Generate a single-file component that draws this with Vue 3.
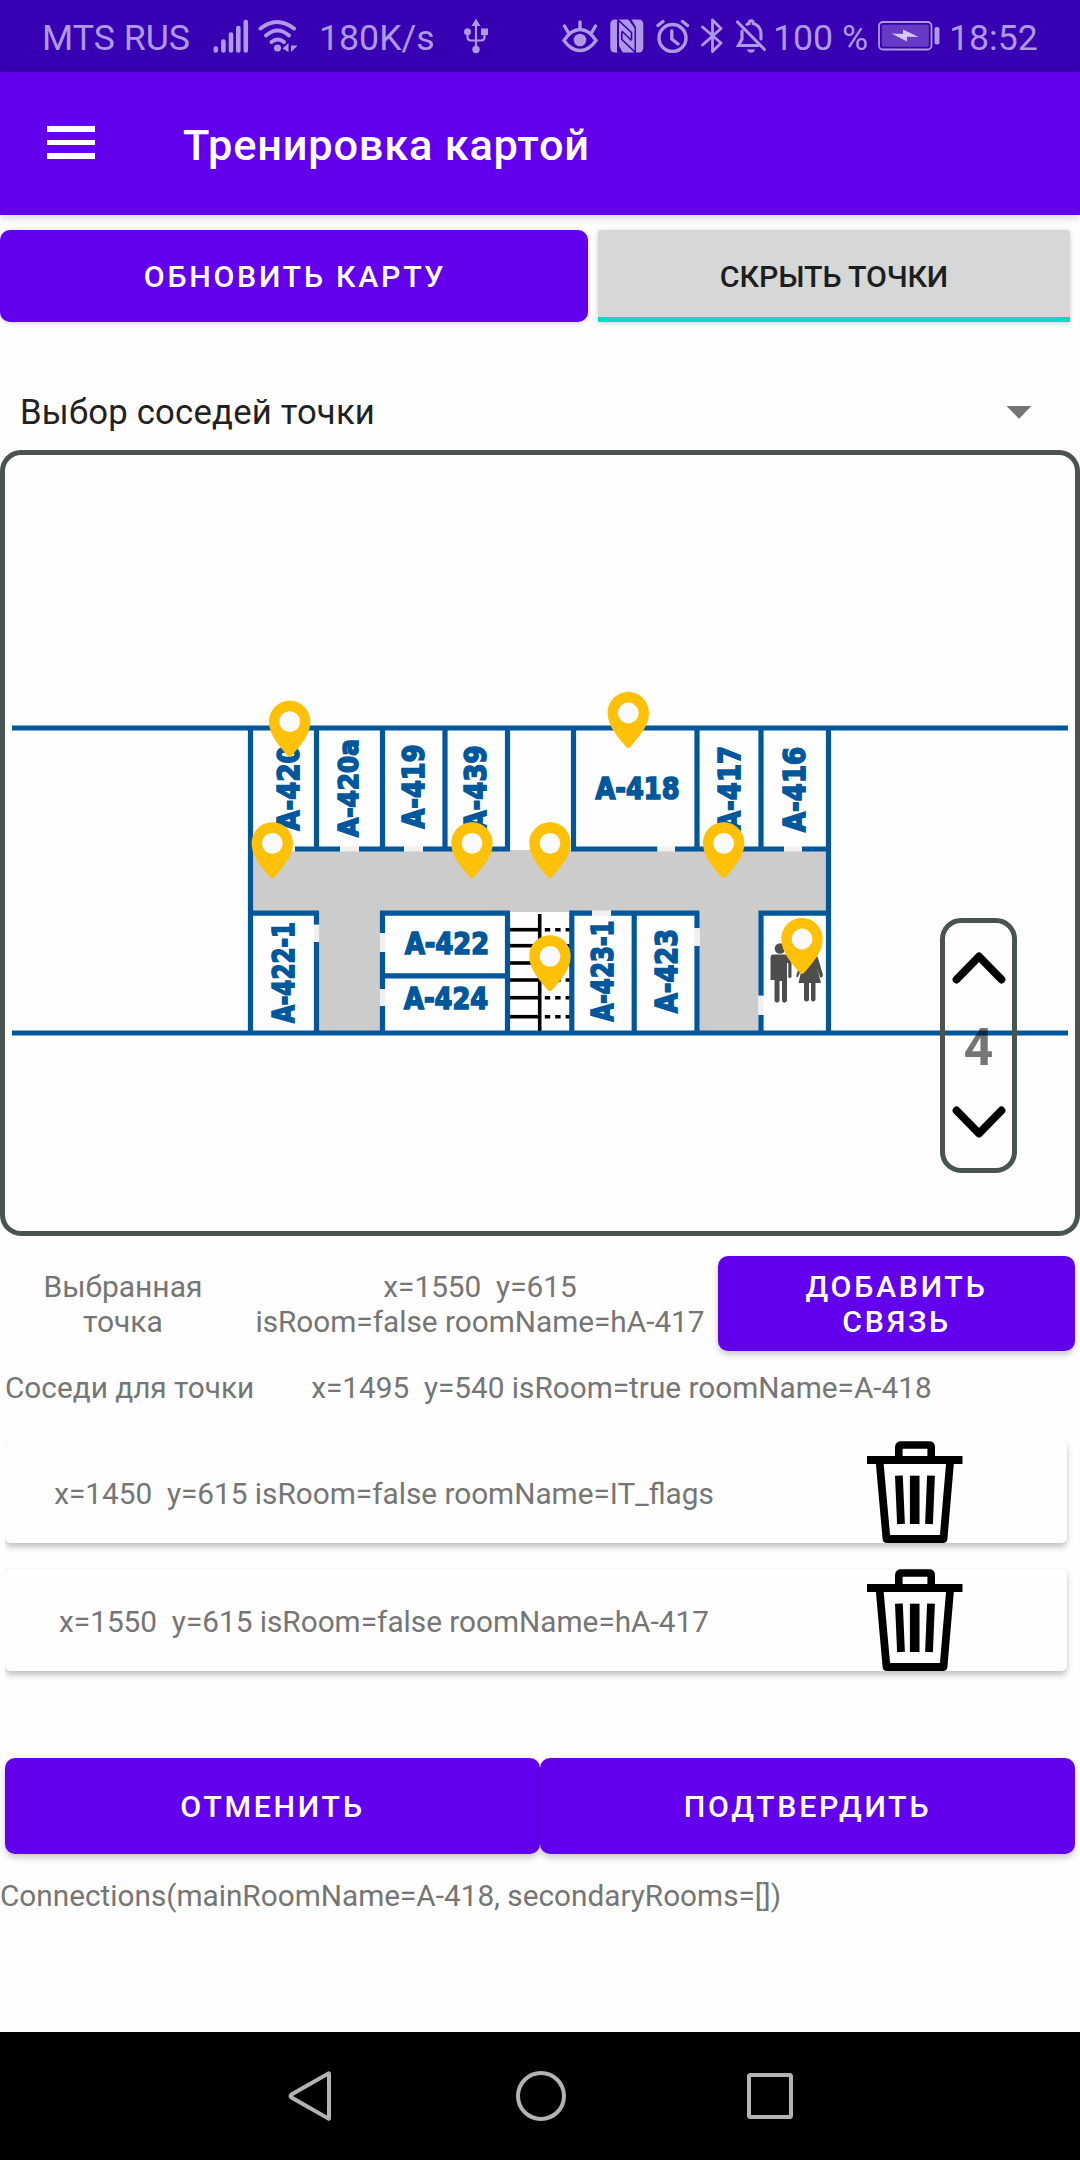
<script setup>
const pins = [
  { x: 289.7, y: 700.7 },
  { x: 272.3, y: 822.3 },
  { x: 472, y: 822.3 },
  { x: 628.3, y: 692 },
  { x: 550, y: 822.3 },
  { x: 723.7, y: 822.3 },
  { x: 550, y: 935.3 },
  { x: 802, y: 918 }
]

const flatLabels = [
  { text: 'A-418', x: 595.5, y: 799.3, len: 84 },
  { text: 'A-422', x: 405, y: 953.8, len: 84 },
  { text: 'A-424', x: 404.1, y: 1009.3, len: 84 }
]

const uprightLabels = [
  { text: 'A-420', x: 298.5, y: 830.5, len: 85 },
  { text: 'A-420a', x: 357.8, y: 837, len: 98, small: true },
  { text: 'A-419', x: 423.5, y: 828.5, len: 84 },
  { text: 'A-439', x: 485.5, y: 830.5, len: 85 },
  { text: 'A-417', x: 740.2, y: 831, len: 85 },
  { text: 'A-416', x: 804.5, y: 832, len: 85 },
  { text: 'A-422-1', x: 294, y: 1023, len: 101 },
  { text: 'A-423-1', x: 612.7, y: 1021.5, len: 101 },
  { text: 'A-423', x: 676.8, y: 1013, len: 84 }
]

const walls = [
  'M12 728H1068M12 1033H1068',
  'M250.5 728V1033M828.5 728V1033',
  'M316.5 728V849M382.5 728V849M445 728V849M507.5 728V851.5M573.5 728V851.5M697 728V849M761 728V849',
  'M253 849H275M295 849H340M359 849H404M423 849H510M571 849H657.5M675 849H784M802 849H829',
  'M250 913.2H319M380 913.2H510M569.3 913.2H592M611 913.2H699.4M758.4 913.2H829M382 975.8H508',
  'M316.5 913V924.7M316.5 942V1033M382.5 913V933M382.5 952V989M382.5 1006V1033M507.5 913V1033',
  'M571.8 913V1033M634.2 913V1033M697 913V928.3M697 945.7V1033M761 913V995.7M761 1015V1033'
].join('')

const doors =
  'M275 849H295M340 849H359M404 849H423M657.5 849H675M784 849H802M592 913.2H611' +
  'M316.5 924.7V942M382.5 933V952M382.5 989V1006M697 928.3V945.7M761 995.7V1015'

const steps = [929.7, 945.7, 963, 980, 997.7, 1016.7]

const neighbours = [
  'x=1450  y=615 isRoom=false roomName=IT_flags',
  'x=1550  y=615 isRoom=false roomName=hA-417'
]
</script>

<template>
  <div class="screen">
    <header class="status">
      <span class="carrier">MTS RUS</span>
      <svg class="signal" width="36" height="34" viewBox="0 0 36 34">
        <path d="M2.8 29.5V31.5M10.4 22.5V31.5M18 15.5V31.5M25.3 9V31.5M32.8 3V31.5" fill="none" stroke="currentColor" stroke-width="4.6" stroke-linecap="round" />
      </svg>
      <svg class="wifi" width="40" height="34" viewBox="0 0 40 34">
        <g fill="none" stroke="currentColor" stroke-width="4" stroke-linecap="round">
          <path d="M2.5 9.5Q19 -3.5 36 9.5" />
          <path d="M8 16.5Q19.5 6.5 31 16.5" />
          <path d="M13.5 23Q20 18 26 23" />
        </g>
        <circle cx="19.5" cy="29" r="3.5" fill="currentColor" />
        <path d="M30.500 24V33L24.500 29.500ZM33 24V33L39 27.300V26.500H33" fill="currentColor" />
      </svg>
      <span class="speed">180K/s</span>
      <svg class="usb" width="24" height="36" viewBox="0 0 24 36">
        <path d="M12 6V31M3.5 13V19Q3.5 22.5 7 22.5H17Q20.5 22.5 20.5 19V13" fill="none" stroke="currentColor" stroke-width="2.2" />
        <path d="M12 0.500L16.500 8H7.500ZM17 10.500H24V17H17Z" fill="currentColor" />
        <circle cx="3.5" cy="13.8" r="3.5" fill="currentColor" />
        <circle cx="12" cy="31.5" r="3.7" fill="currentColor" />
      </svg>
      <svg class="eye" width="36" height="34" viewBox="0 0 36 34">
        <g fill="none" stroke="currentColor" stroke-width="3.4" stroke-linecap="round">
          <path d="M2 21.5Q9 10.5 18 10.5T34 21.5Q27 31.5 18 31.5T2 21.5Z" />
          <path d="M18 3V10M2.5 7L6 13M33.5 7L30 13" />
        </g>
        <circle cx="18" cy="21" r="6.3" fill="currentColor" />
      </svg>
      <svg class="nfc" width="34" height="34" viewBox="0 0 34 34">
        <rect x="0.300" y="0.500" width="33" height="33" rx="4.500" fill="currentColor" />
        <path d="M7 0L21.500 13.500V20.500" fill="none" stroke="#3700b3" stroke-width="1.600" />
        <path d="M8 2V33" fill="none" stroke="#3700b3" stroke-width="2" />
        <path d="M26 34L11.800 20.500V13" fill="none" stroke="#3700b3" stroke-width="1.600" />
        <path d="M11.800 12L21.500 21.500" fill="none" stroke="#3700b3" stroke-width="1.600" />
        <path d="M18 0H21L26 8V34H24.500V9Z" fill="#3700b3" />
        <path d="M8 25L13 34H8Z" fill="#3700b3" />
      </svg>
      <svg class="alarm" width="34" height="34" viewBox="0 0 34 34">
        <g fill="none" stroke="currentColor" stroke-width="3.4" stroke-linecap="round">
          <circle cx="16.5" cy="19" r="13.5" />
          <path d="M15.8 12V20L22 25M2 6.5L7 2.5M26.5 2.5L31.5 6.5" />
        </g>
      </svg>
      <svg class="bt" width="22" height="36" viewBox="0 0 22 36">
        <path d="M1.5 9L20 25L11.5 33.5V2L20 10.5L1.5 27" fill="none" stroke="currentColor" stroke-width="2.9" stroke-linejoin="round" stroke-linecap="round" />
      </svg>
      <svg class="bell" width="30" height="34" viewBox="0 0 30 34">
        <g fill="none" stroke="currentColor" stroke-width="3.100" stroke-linecap="round">
          <path d="M1.5 3L28.5 30.5M6 12V20L2.5 26.500H22M11 5.500Q12.500 4.500 13 4.500Q13 1.800 15.200 1.800T17.300 4.500Q25 7 25 15V20" />
        </g>
        <path d="M11 30.500H19Q18 33.700 15 33.700T11 30.500Z" fill="currentColor" />
      </svg>
      <span class="percent">100 %</span>
      <svg class="battery" width="62" height="30" viewBox="0 0 62 30">
        <rect x="1" y="1" width="52.5" height="27.5" rx="4" fill="none" stroke="currentColor" stroke-width="1.8" />
        <rect x="3.8" y="3.8" width="47" height="22" rx="1.5" fill="currentColor" opacity="0.38" />
        <rect x="56.5" y="6" width="5" height="17.5" rx="2" fill="currentColor" />
        <path d="M13.500 12.500L25 13V8.500L40.500 16L29 15.800V20.500Z" fill="#d6c8f2" />
      </svg>
      <span class="clock">18:52</span>
    </header>

    <div class="toolbar">
      <div class="burger"><i></i><i></i><i></i></div>
      <h1>Тренировка картой</h1>
    </div>

    <div class="actions">
      <button class="btn refresh">ОБНОВИТЬ КАРТУ</button>
      <button class="toggle">СКРЫТЬ ТОЧКИ</button>
    </div>

    <div class="spinner">
      <span>Выбор соседей точки</span>
      <svg width="26" height="13" viewBox="0 0 26 13"><path d="M0.500 0H25.500L13 12.800Z" fill="#757575" /></svg>
    </div>

    <section class="map">
      <svg class="plan" width="1070" height="776" viewBox="5 455 1070 776">
        <path d="M253 850H826V912H758.500V1031H699.500V912H380V1031H319V912H253Z" fill="#ccc" />
        <g stroke="#000" stroke-width="3.600">
          <path d="M539.700 914V1031" />
          <template v-for="s in steps" :key="s">
            <path :d="`M510 ${s}H541`" />
            <path :d="`M544.800 ${s}H570`" stroke-dasharray="5.400 5" />
          </template>
        </g>
        <path :d="walls" fill="none" stroke="#00579b" stroke-width="5.2" />
        <path :d="doors" fill="none" stroke="#f0f0f0" stroke-width="5.2" />
        <g class="labels">
          <text v-for="l in flatLabels" :key="l.text" :x="l.x" :y="l.y" :textLength="l.len" lengthAdjust="spacingAndGlyphs">{{ l.text }}</text>
          <text
            v-for="l in uprightLabels"
            :key="l.text"
            :class="{ small: l.small }"
            :transform="`translate(${l.x} ${l.y}) rotate(-90)`"
            :textLength="l.len"
            lengthAdjust="spacingAndGlyphs"
          >{{ l.text }}</text>
        </g>
        <g fill="#4d4d4d">
          <circle cx="780" cy="948.500" r="5.300" />
          <path d="M773 954.500H788Q791.500 954.500 791.500 958V977Q790 979 788.300 977V963H787V1001Q784.500 1004.500 782 1001V981H779.500V1001Q777 1004.500 774.500 1001V980H770.500V958Q770.500 954.500 773 954.500Z" />
          <circle cx="810" cy="948.500" r="5.300" />
          <path d="M805 955H815Q817 955 818 958L823 975Q822 979 820 977L817 968L821 983H815.500V1000Q813 1003 811 1000V983H809V1000Q806.500 1003 804 1000V983H798.500L802 968L798 977Q796 978 796.500 975L802 958Z" />
        </g>
        <g v-for="(p, i) in pins" :key="i" :transform="`translate(${p.x} ${p.y})`">
          <path d="M0 0C-11.500 0 -20.700 9.200 -20.700 21C-20.700 35 -9 46.500 -2 55Q0 57 2 55C9 46.500 20.700 35 20.700 21C20.700 9.200 11.500 0 0 0Z" fill="#ffc107" />
          <circle cx="0" cy="21" r="10.400" fill="#fafafa" />
        </g>
      </svg>
      <div class="floors">
        <svg width="54" height="34" viewBox="0 0 54 34"><path d="M4.500 28.500L27 5.500L49.500 28.500" /></svg>
        <b>4</b>
        <svg width="54" height="34" viewBox="0 0 54 34"><path d="M4.500 5.500L27 28.500L49.500 5.500" /></svg>
      </div>
    </section>

    <div class="selected">
      <p class="caption">Выбранная<br>точка</p>
      <p class="point">x=1550&nbsp; y=615<br>isRoom=false roomName=hA-417</p>
      <button class="btn add">ДОБАВИТЬ<br>СВЯЗЬ</button>
    </div>

    <div class="source">
      <span>Соседи для точки</span>
      <span class="origin">x=1495&nbsp; y=540 isRoom=true roomName=A-418</span>
    </div>

    <div class="list">
      <div v-for="n in neighbours" :key="n" class="card">
        <span>{{ n }}</span>
        <svg width="96" height="102" viewBox="0 0 96 102">
          <g fill="none" stroke="#000">
            <path d="M0 19H95.500M12.700 22L19.500 98H76.500L83 22" stroke-width="7.800" stroke-linejoin="round" />
            <path d="M31.800 17V6Q31.800 4 34 4H62Q64.200 4 64.200 6V17" stroke-width="7.600" />
            <path d="M31.900 34.700L34 83M64 34.700L62 83" stroke-width="7.800" />
            <path d="M47.700 34.700V83" stroke-width="9.600" />
          </g>
        </svg>
      </div>
    </div>

    <div class="confirm">
      <button class="btn">ОТМЕНИТЬ</button>
      <button class="btn">ПОДТВЕРДИТЬ</button>
    </div>

    <p class="debug">Connections(mainRoomName=A-418, secondaryRooms=[])</p>

    <nav class="navbar">
      <svg width="44" height="52" viewBox="0 0 44 52"><path d="M41 3.500V48.500Q41 49 40.500 48.600L3.500 27.500Q1.500 26 3.500 24.500L40.500 3.400Q41 3 41 3.500Z" /></svg>
      <svg class="home" width="50" height="52" viewBox="0 0 50 52"><circle cx="25" cy="26" r="23" /></svg>
      <svg class="recent" width="46" height="52" viewBox="0 0 46 52"><rect x="2" y="5" width="42" height="42" rx="1.500" /></svg>
    </nav>
  </div>
</template>

<style>
body {
  background: #fefefe;
}
</style>

<style scoped>
.screen {
  width: 1080px;
  height: 2160px;
  display: flex;
  flex-direction: column;
  overflow: hidden;
  background: #fefefe;
  font-family: Roboto, "Noto Sans", sans-serif;
  font-size: 29.75px;
  line-height: 35px;
  color: #757575;
}
p,
h1 {
  margin: 0;
}
svg {
  display: block;
  flex: none;
}
.status {
  height: 72px;
  flex: none;
  box-sizing: border-box;
  padding: 0 0 0 42px;
  display: flex;
  align-items: center;
  background: #3700b3;
  color: #af99e4;
  font-size: 35.7px;
  line-height: 42px;
  white-space: nowrap;
}
.status span {
  flex: none;
  padding-top: 3px;
}
.carrier { width: 171px; }
.wifi { margin-left: 9px; }
.speed { width: 122px; margin-left: 21px; }
.usb { margin-left: 23px; }
.eye { margin-left: 74px; }
.nfc { margin-left: 12px; }
.alarm { margin-left: 12px; }
.bt { margin-left: 11px; }
.bell { margin-left: 13px; }
.percent { width: 98px; margin-left: 7px; }
.battery { margin-left: 7px; }
.clock { margin-left: 9px; }

.toolbar {
  position: relative;
  height: 143px;
  flex: none;
  box-sizing: border-box;
  display: flex;
  align-items: center;
  padding-left: 47px;
  background: #6200ee;
  box-shadow: 0 2px 9px rgba(0, 0, 0, 0.2);
}
.burger {
  width: 48px;
  display: flex;
  flex-direction: column;
  gap: 8px;
  margin-bottom: 2px;
}
.burger i {
  height: 5.4px;
  background: #fff;
}
h1 {
  margin-left: 88px;
  color: #fff;
  font-size: 43.35px;
  line-height: 52px;
  font-weight: 500;
  letter-spacing: 0.79px;
  padding-top: 4px;
}
.actions {
  display: flex;
  gap: 10px;
  margin-top: 15px;
}
button {
  display: block;
  border: 0;
  padding: 0;
  font: inherit;
  font-size: 30.35px;
  font-weight: 500;
  text-align: center;
}
.btn {
  background: #6200ee;
  color: #fff;
  border-radius: 10px;
  letter-spacing: 2.71px;
  box-shadow: 0 4px 6px rgba(0, 0, 0, 0.2);
}
.refresh {
  width: 588px;
  height: 92px;
  padding-left: 2px;
  box-shadow: 0 1px 5px rgba(0, 0, 0, 0.2);
}
.toggle {
  width: 472px;
  height: 92px;
  box-sizing: border-box;
  border-bottom: 5px solid #0bd8c6;
  border-radius: 4px 4px 0 0;
  background: #d6d8d7;
  color: #1e1e1e;
  padding-top: 5px;
  letter-spacing: -0.15px;
  box-shadow: 0 1px 5px rgba(0, 0, 0, 0.2);
}
.spinner {
  height: 128px;
  flex: none;
  box-sizing: border-box;
  padding: 52px 48px 0 20px;
  display: flex;
  align-items: center;
  justify-content: space-between;
  font-size: 34.68px;
  line-height: 40px;
  letter-spacing: 0.2px;
  color: #212121;
}
.map {
  position: relative;
  width: 1080px;
  height: 786px;
  flex: none;
  box-sizing: border-box;
  border: 5px solid #495352;
  border-radius: 21px;
}
.labels text {
  font-family: "DejaVu Sans", sans-serif;
  font-weight: 700;
  font-size: 29.4px;
  fill: #00579b;
  stroke: #00579b;
  stroke-width: 1.7px;
}
.labels .small {
  font-size: 26.5px;
}
.floors {
  position: absolute;
  left: 935px;
  top: 463px;
  width: 77px;
  height: 255px;
  box-sizing: border-box;
  border: 5px solid #495352;
  border-radius: 21px;
  display: flex;
  flex-direction: column;
  align-items: center;
  padding-top: 28px;
}
.floors path {
  fill: none;
  stroke: #000;
  stroke-width: 7.8px;
  stroke-linecap: round;
  stroke-linejoin: round;
}
.floors b {
  font-size: 52px;
  line-height: 62px;
  color: rgba(0, 0, 0, 0.54);
  margin: 32px 0 26px;
}
.selected {
  display: flex;
  align-items: center;
  margin-top: 20px;
  height: 95px;
  text-align: center;
}
.caption {
  width: 246px;
  font-size: 30px;
}
.point {
  width: 468px;
  white-space: nowrap;
}
.add {
  width: 357px;
  height: 95px;
  margin-left: 4px;
}
.source {
  display: flex;
  margin: 19px 0 0 5px;
  white-space: nowrap;
}
.origin {
  margin-left: 57px;
}
.list {
  display: flex;
  flex-direction: column;
  gap: 26px;
  margin: 36px 0 0 5px;
  padding-bottom: 20px;
  overflow: hidden;
  flex: none;
}
.card {
  width: 1062px;
  height: 102px;
  display: flex;
  align-items: center;
  border-radius: 5px;
  box-shadow: 0 4px 6px rgba(0, 0, 0, 0.24), 0 0 1px rgba(0, 0, 0, 0.12);
}
.card span {
  width: 758px;
  padding-top: 2px;
  text-align: center;
  white-space: pre;
}
.card svg {
  margin-left: 104px;
}
.confirm {
  display: flex;
  margin: 67px 5px 0;
}
.confirm .btn {
  flex: 1;
  height: 96px;
}
.debug {
  margin-top: 24px;
  white-space: nowrap;
}
.navbar {
  margin-top: auto;
  height: 128px;
  flex: none;
  display: flex;
  align-items: center;
  justify-content: center;
  background: #000;
}
.navbar svg {
  fill: none;
  stroke: #b3b3b3;
  stroke-width: 4px;
}
.navbar .home {
  margin-left: 184px;
}
.navbar .recent {
  margin-left: 181px;
}
</style>
